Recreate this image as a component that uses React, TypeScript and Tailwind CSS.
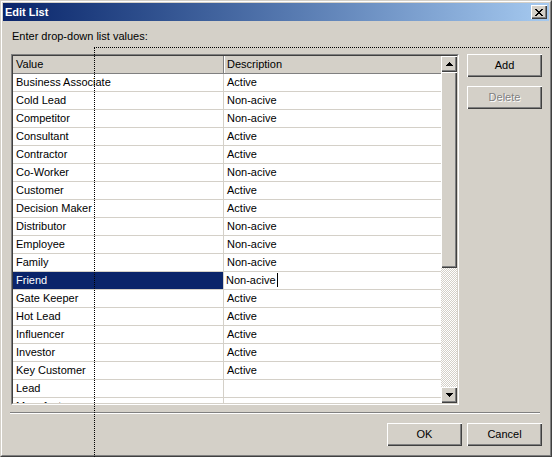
const rows: [string, string][] = [
  ['Business Associate', 'Active'],
  ['Cold Lead', 'Non-acive'],
  ['Competitor', 'Non-acive'],
  ['Consultant', 'Active'],
  ['Contractor', 'Active'],
  ['Co-Worker', 'Non-acive'],
  ['Customer', 'Active'],
  ['Decision Maker', 'Active'],
  ['Distributor', 'Non-acive'],
  ['Employee', 'Non-acive'],
  ['Family', 'Non-acive'],
  ['Friend', 'Non-acive'],
  ['Gate Keeper', 'Active'],
  ['Hot Lead', 'Active'],
  ['Influencer', 'Active'],
  ['Investor', 'Active'],
  ['Key Customer', 'Active'],
  ['Lead', ''],
  ['Manufacturer', ''],
]

const raised = 'shadow-[inset_1px_1px_0_#fff,inset_-1px_-1px_0_#404040,inset_-2px_-2px_0_#808080] bg-[#d4d0c8]'

function Arrow({ up }: { up?: boolean }) {
  const bars = [0, 1, 2, 3]
  return (
    <svg width="7" height="4" viewBox="0 0 7 4" shapeRendering="crispEdges">
      {bars.map((i) => (
        <rect key={i} x={3 - i} y={up ? i : 3 - i} width={2 * i + 1} height={1} fill="#000" />
      ))}
    </svg>
  )
}

function Button({ label, disabled, className }: { label: string; disabled?: boolean; className?: string }) {
  return (
    <div className={`flex h-[23px] w-[75px] items-center justify-center ${raised} ${className ?? ''}`}>
      <span
        className={disabled ? 'text-[#808080] [text-shadow:1px_1px_0_#fff]' : 'text-black'}
      >
        {label}
      </span>
    </div>
  )
}

export default function App() {
  return (
    <div className="relative h-[457px] w-[552px] overflow-hidden font-['Liberation_Sans',Arial,sans-serif] text-[11px] leading-[13px] text-black">
      <div className="h-full border border-t-[#d4d0c8] border-l-[#d4d0c8] border-r-[#404040] border-b-[#404040] bg-[#d4d0c8]">
        <div className="flex h-full flex-col border border-t-white border-l-white border-r-[#808080] border-b-[#808080] p-px">
          {/* title bar */}
          <div className="flex h-[18px] shrink-0 items-center justify-between bg-gradient-to-r from-[#0a246a] to-[#a6caf0] pl-[2px] pr-[2px]">
            <span className="text-[11px] font-bold text-white">Edit List</span>
            <div className={`flex h-[14px] w-[16px] items-center justify-center ${raised}`}>
              <svg width="8" height="7" viewBox="0 0 8 7" shapeRendering="crispEdges">
                <path d="M0 0h2v1h-2zM6 0h2v1h-2zM1 1h2v1h-2zM5 1h2v1h-2zM2 2h4v1h-4zM3 3h2v1h-2zM2 4h4v1h-4zM1 5h2v1h-2zM5 5h2v1h-2zM0 6h2v1h-2zM6 6h2v1h-2z" fill="#000" />
              </svg>
            </div>
          </div>

          {/* body */}
          <div className="flex flex-1 flex-col">
            <div className="pl-[9px] pt-[9px]">Enter drop-down list values:</div>

            <div className="mt-[11px] flex gap-[8px] pl-[8px]">
              {/* grid */}
              <div className="h-[351px] w-[448px] border border-t-[#808080] border-l-[#808080] border-r-white border-b-white">
                <div className="flex h-full border border-t-[#404040] border-l-[#404040] border-r-[#d4d0c8] border-b-[#d4d0c8] bg-white">
                  <div className="w-[428px] overflow-hidden">
                    <div className="flex h-[18px] border-b border-[#808080] bg-[#d4d0c8]">
                      <div className="w-[211px] border-r border-[#808080] pl-[3px] pt-[2px]">Value</div>
                      <div className="flex-1 pl-[3px] pt-[2px] shadow-[inset_1px_0_0_#fff]">Description</div>
                    </div>
                    {rows.map(([v, d], i) => {
                      const sel = v === 'Friend'
                      return (
                        <div key={i} className="flex h-[18px] border-b border-[#d4d0c8]">
                          <div
                            className={`w-[211px] border-r border-[#d4d0c8] pl-[3px] pt-[2px] ${sel ? 'bg-[#0a246a] text-white' : ''}`}
                          >
                            {v}
                          </div>
                          <div className={`flex flex-1 items-start pt-[2px] ${sel ? 'pl-[2px]' : 'pl-[3px]'}`}>
                            <span>{d}</span>
                            {sel && <span className="ml-px mt-[-1px] h-[14px] w-px bg-black" />}
                          </div>
                        </div>
                      )
                    })}
                  </div>

                  {/* scrollbar */}
                  <div className="flex w-[16px] flex-col">
                    <div className={`flex h-[16px] items-center justify-center ${raised}`}>
                      <Arrow up />
                    </div>
                    <div className={`h-[196px] ${raised}`} />
                    <div className="flex-1 bg-[repeating-conic-gradient(#fff_0_25%,#d4d0c8_0_50%)] bg-[length:2px_2px]" />
                    <div className={`flex h-[16px] items-center justify-center ${raised}`}>
                      <Arrow />
                    </div>
                  </div>
                </div>
              </div>

              {/* side buttons */}
              <div className="flex flex-col gap-[9px]">
                <Button label="Add" />
                <Button label="Delete" disabled />
              </div>
            </div>

            {/* separator */}
            <div className="ml-[7px] mt-[7px] h-[2px] w-[530px] border-t border-b border-t-[#808080] border-b-white" />

            <div className="mt-[9px] flex justify-end gap-[5px] pr-[7px]">
              <Button label="OK" />
              <Button label="Cancel" />
            </div>
          </div>
        </div>
      </div>

      {/* dotted drag outline */}
      <div className="absolute left-[94px] right-[3px] top-[47px] border-t border-dotted border-black" />
      <div className="absolute bottom-0 left-[94px] top-[47px] border-l border-dotted border-black" />
    </div>
  )
}
